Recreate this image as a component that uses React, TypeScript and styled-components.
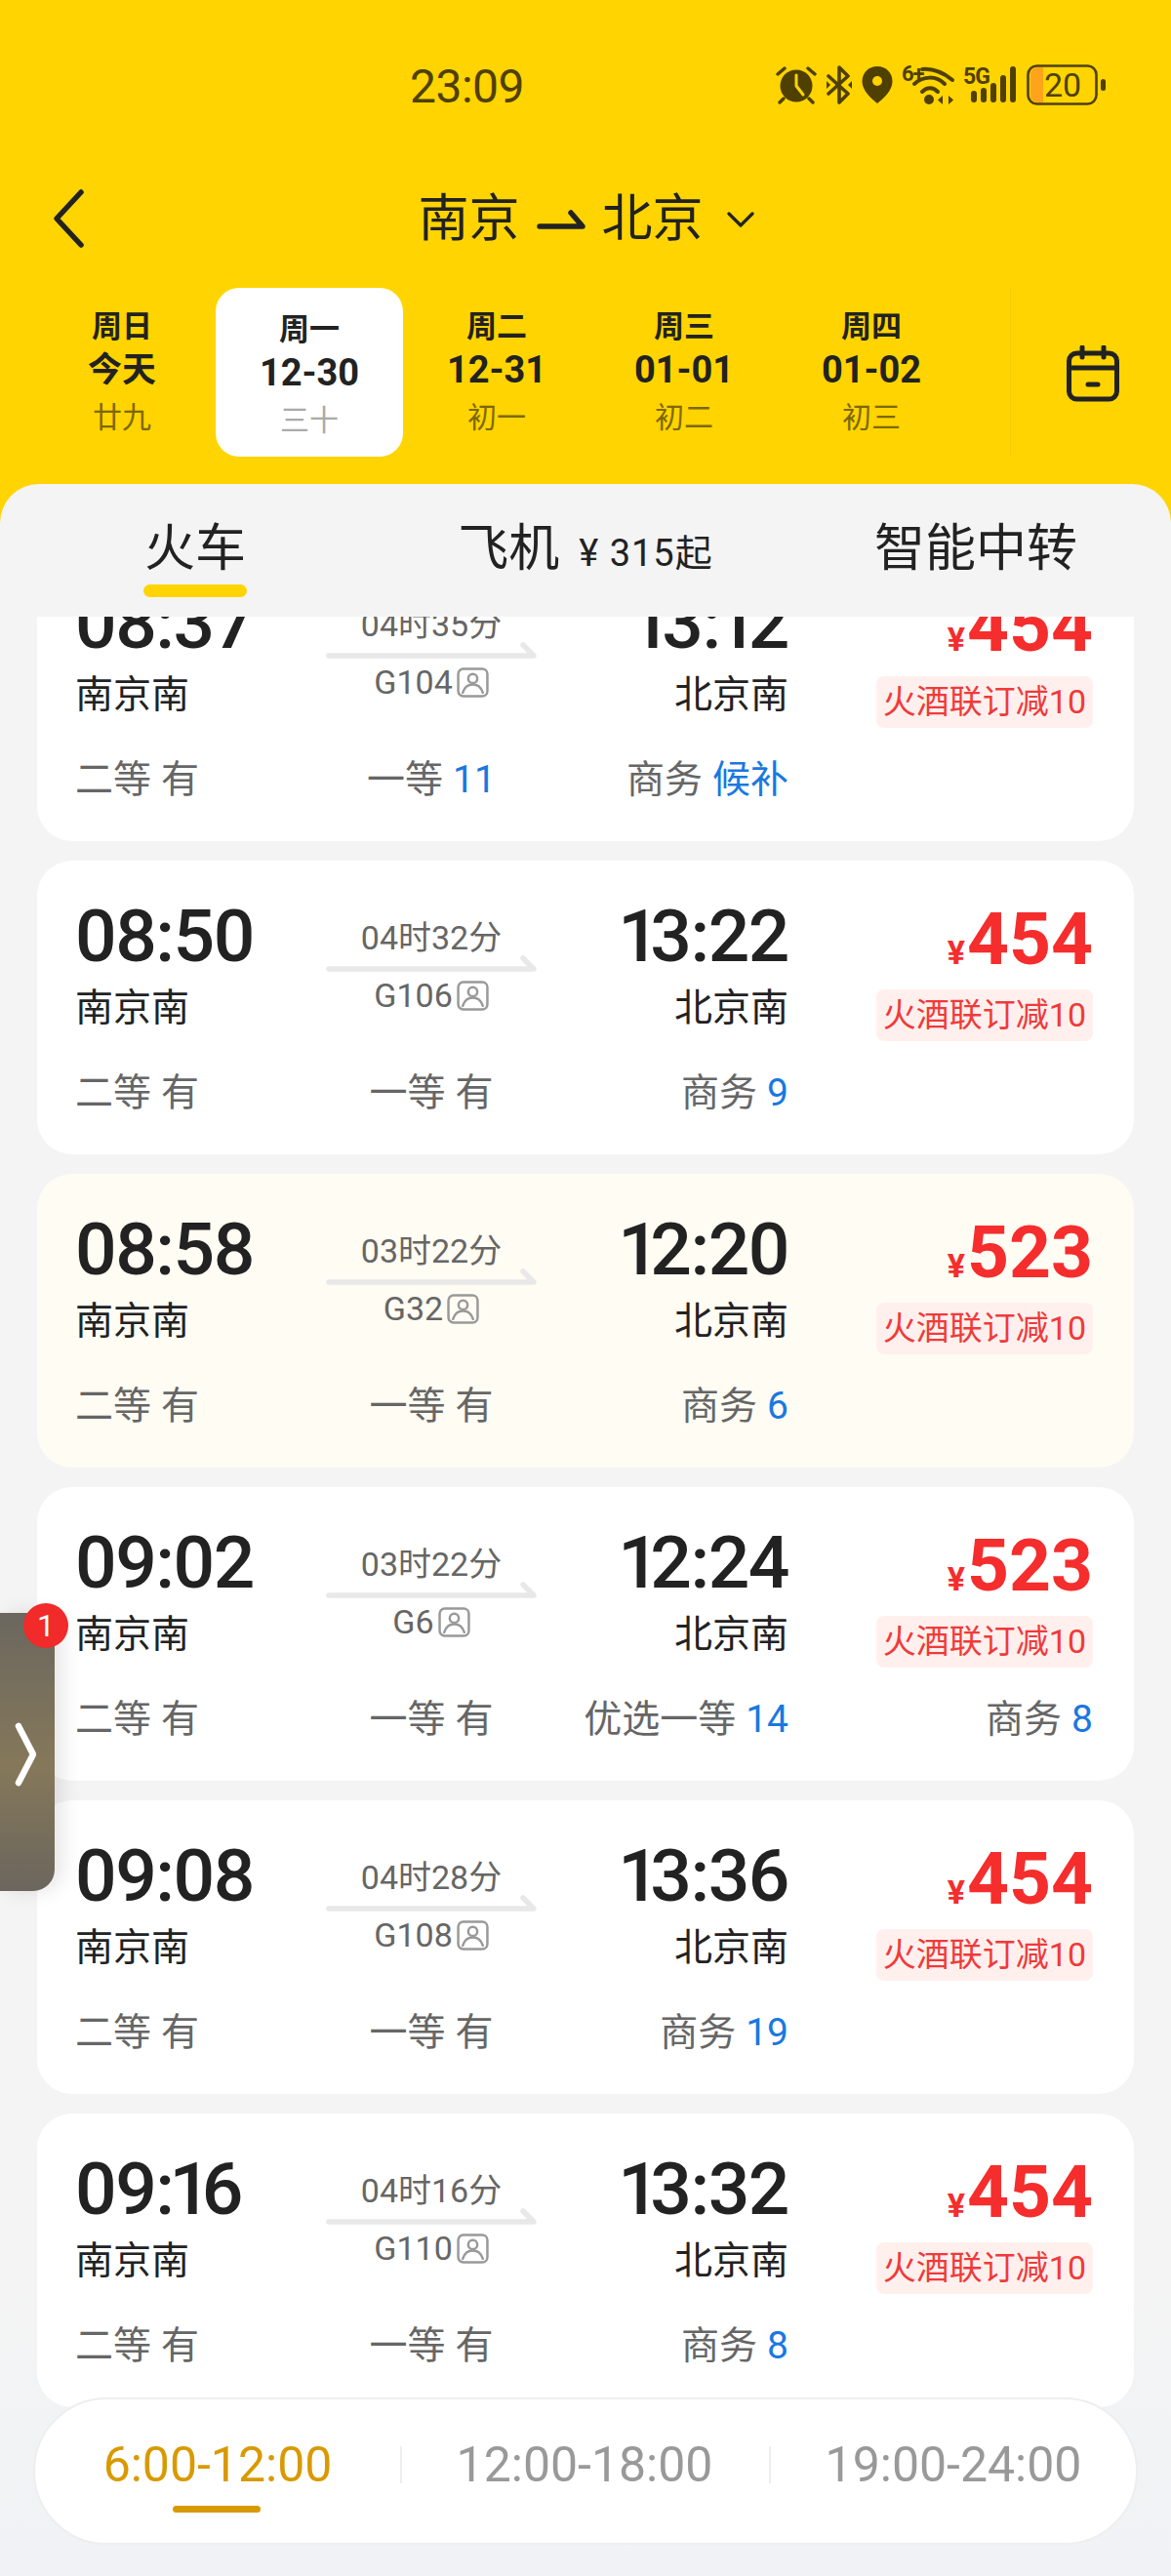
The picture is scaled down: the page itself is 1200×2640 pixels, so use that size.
import styled, { createGlobalStyle } from 'styled-components';

const GlobalStyle = createGlobalStyle`
    html, body {
        margin: 0;
        padding: 0;
        background: #f4f4f4;
    }
    * {
        box-sizing: border-box;
    }
`;

const YELLOW = '#ffd400';
const FONT = `Roboto, 'Noto Sans CJK SC', sans-serif`;

type Seat = { label: string; value: string; blue?: boolean };
type Train = {
    depart: string;
    arrive: string;
    duration: string;
    code: string;
    price: string;
    seats: Seat[];
    highlight?: boolean;
};

const trains: Train[] = [
    {
        depart: '08:37',
        arrive: '13:12',
        duration: '04时35分',
        code: 'G104',
        price: '454',
        seats: [
            { label: '二等', value: '有' },
            { label: '一等', value: '11', blue: true },
            { label: '商务', value: '候补', blue: true }
        ]
    },
    {
        depart: '08:50',
        arrive: '13:22',
        duration: '04时32分',
        code: 'G106',
        price: '454',
        seats: [
            { label: '二等', value: '有' },
            { label: '一等', value: '有' },
            { label: '商务', value: '9', blue: true }
        ]
    },
    {
        depart: '08:58',
        arrive: '12:20',
        duration: '03时22分',
        code: 'G32',
        price: '523',
        highlight: true,
        seats: [
            { label: '二等', value: '有' },
            { label: '一等', value: '有' },
            { label: '商务', value: '6', blue: true }
        ]
    },
    {
        depart: '09:02',
        arrive: '12:24',
        duration: '03时22分',
        code: 'G6',
        price: '523',
        seats: [
            { label: '二等', value: '有' },
            { label: '一等', value: '有' },
            { label: '优选一等', value: '14', blue: true },
            { label: '商务', value: '8', blue: true }
        ]
    },
    {
        depart: '09:08',
        arrive: '13:36',
        duration: '04时28分',
        code: 'G108',
        price: '454',
        seats: [
            { label: '二等', value: '有' },
            { label: '一等', value: '有' },
            { label: '商务', value: '19', blue: true }
        ]
    },
    {
        depart: '09:16',
        arrive: '13:32',
        duration: '04时16分',
        code: 'G110',
        price: '454',
        seats: [
            { label: '二等', value: '有' },
            { label: '一等', value: '有' },
            { label: '商务', value: '8', blue: true }
        ]
    }
];

const dates = [
    { week: '周日', day: '今天', lunar: '廿九', word: true },
    { week: '周一', day: '12-30', lunar: '三十', active: true },
    { week: '周二', day: '12-31', lunar: '初一' },
    { week: '周三', day: '01-01', lunar: '初二' },
    { week: '周四', day: '01-02', lunar: '初三' },
    { week: '周五', day: '01-03', lunar: '初四' }
];

const AlarmIcon = () => (
    <svg width="42" height="40" viewBox="0 0 42 40" fill="none">
        <circle cx="21" cy="21" r="16.5" fill="#4f4000" />
        <path d="M21 10v11l7 9" stroke={YELLOW} strokeWidth="3" strokeLinecap="round" strokeLinejoin="round" />
        <path d="M2 9l7-6M40 9l-7-6M8 34l-4 4M34 34l4 4" stroke="#4f4000" strokeWidth="3.4" strokeLinecap="round" />
    </svg>
);

const BluetoothIcon = () => (
    <svg width="28" height="40" viewBox="0 0 28 40" fill="none">
        <path
            d="M3 11l20 18-9 9V2l9 9L3 29"
            stroke="#4f4000"
            strokeWidth="3.6"
            strokeLinecap="round"
            strokeLinejoin="round"
        />
        <path d="M1 16v8l4-4zM27 16v8l-4-4z" fill="#4f4000" />
    </svg>
);

const PinIcon = () => (
    <svg width="32" height="38" viewBox="0 0 32 38">
        <path
            d="M16 0C7 0 .5 6.700.5 15.500.5 25 10 33 16 38c6-5 15.500-13 15.500-22.500C31.500 6.700 25 0 16 0z"
            fill="#4f4000"
        />
        <circle cx="16" cy="15" r="5" fill={YELLOW} />
    </svg>
);

const WifiIcon = () => (
    <svg width="54" height="42" viewBox="0 0 54 42" fill="none" overflow="visible">
        <text x="0" y="17" fontFamily="Roboto, sans-serif" fontSize="22" fontWeight="700" fill="#4f4000" letterSpacing="-1">
            6+
        </text>
        <path d="M21 5c11-1 21 3 31 11" stroke="#4f4000" strokeWidth="4" strokeLinecap="round" />
        <path d="M13 20c9-8 22-9 31 0" stroke="#4f4000" strokeWidth="4" strokeLinecap="round" />
        <path d="M21 28c5-5 11-5 16 0" stroke="#4f4000" strokeWidth="4" strokeLinecap="round" />
        <circle cx="28" cy="36" r="5" fill="#4f4000" />
        <path d="M42 32l-5 4.500 5 4.500zM48 32l5 4.500-5 4.500z" fill="#4f4000" />
    </svg>
);

const SignalIcon = () => (
    <svg width="56" height="40" viewBox="0 0 56 40" overflow="visible">
        <text x="0" y="19" fontFamily="Roboto, sans-serif" fontSize="23" fontWeight="700" fill="#4f4000" letterSpacing="-1">
            5G
        </text>
        <rect x="8" y="26" width="6" height="12" rx="3" fill="#4f4000" />
        <rect x="18" y="23" width="6" height="15" rx="3" fill="#4f4000" />
        <rect x="28" y="18" width="6" height="20" rx="3" fill="#4f4000" />
        <rect x="38" y="10" width="6" height="28" rx="3" fill="#4f4000" />
        <rect x="48" y="1" width="6" height="37" rx="3" fill="#4f4000" />
    </svg>
);

const BatteryIcon = () => (
    <svg width="82" height="42" viewBox="0 0 82 42" fill="none">
        <rect x="1.500" y="1.500" width="70" height="39" rx="9" stroke="#4f4000" strokeWidth="2.600" />
        <path d="M4 10a7 7 0 0 1 7-7h6v36h-6a7 7 0 0 1-7-7z" fill="#ffa31a" />
        <rect x="76" y="15" width="5" height="12" rx="2.500" fill="#4f4000" />
        <text x="18" y="33" fontFamily="Roboto, sans-serif" fontSize="34" fontWeight="400" fill="#4f4000">
            20
        </text>
    </svg>
);

const BackIcon = () => (
    <svg width="36" height="62" viewBox="0 0 36 62" fill="none">
        <path d="M31 4L6 31l25 27" stroke="#222" strokeWidth="5.500" strokeLinecap="round" strokeLinejoin="round" />
    </svg>
);

const RouteArrow = () => (
    <svg width="50" height="20" viewBox="0 0 50 20" fill="none">
        <path d="M3 17h44L35 3" stroke="#222" strokeWidth="5.500" strokeLinecap="round" strokeLinejoin="round" />
    </svg>
);

const DownIcon = () => (
    <svg width="30" height="16" viewBox="0 0 30 16" fill="none">
        <path d="M3 2l12 12L27 2" stroke="#222" strokeWidth="3.200" strokeLinecap="round" strokeLinejoin="round" />
    </svg>
);

const CalendarIcon = () => (
    <svg width="54" height="58" viewBox="0 0 54 58" fill="none">
        <rect x="2.500" y="8" width="49" height="47" rx="8" stroke="#222" strokeWidth="5" />
        <path d="M3 23h48M16 2v10M38 2v10M22 40h10" stroke="#222" strokeWidth="5" strokeLinecap="round" />
    </svg>
);

const TrackArrow = () => (
    <svg width="216" height="18" viewBox="0 0 216 18" fill="none">
        <path d="M3 15h210L202 4" stroke="#e8e8e8" strokeWidth="5.500" strokeLinecap="round" strokeLinejoin="round" />
    </svg>
);

const IdIcon = () => (
    <svg width="33" height="31" viewBox="0 0 32 30" fill="none">
        <rect x="1.500" y="1.500" width="29" height="27" rx="5" stroke="#999" strokeWidth="2.400" />
        <circle cx="16" cy="11" r="4.500" stroke="#999" strokeWidth="2.400" />
        <path d="M6 25c2-6 6-8 10-8s8 2 10 8" stroke="#999" strokeWidth="2.400" strokeLinecap="round" />
    </svg>
);

const HandleChevron = () => (
    <svg width="22" height="66" viewBox="0 0 22 66" fill="none">
        <path d="M4 4l15 29L4 62" stroke="#fff" strokeWidth="6.500" strokeLinecap="round" strokeLinejoin="round" />
    </svg>
);

// the reference's digits are proportional, roboto's are not: pull the 1s in
const TimeText = ({ value }: { value: string }) => (
    <Time>
        {value.split('').map((c, i) => (
            <TimeChar key={i} $narrow={c === '1'}>
                {c}
            </TimeChar>
        ))}
    </Time>
);

export default function App() {
    return (
        <Page>
            <GlobalStyle />
            <Header>
                <StatusBar>
                    <Clock>23:09</Clock>
                    <StatusIcons>
                        <AlarmIcon />
                        <BluetoothIcon />
                        <PinIcon />
                        <WifiIcon />
                        <SignalIcon />
                        <BatteryIcon />
                    </StatusIcons>
                </StatusBar>
                <NavBar>
                    <BackButton>
                        <BackIcon />
                    </BackButton>
                    <Route>
                        <span>南京</span>
                        <RouteArrow />
                        <span>北京</span>
                        <DownIcon />
                    </Route>
                </NavBar>
                <DateStrip>
                    <DateList>
                        {dates.map((d) => (
                            <DateItem key={d.week} $active={d.active}>
                                <DateWeek>{d.week}</DateWeek>
                                <DateDay $word={d.word}>{d.day}</DateDay>
                                <DateLunar $active={d.active}>{d.lunar}</DateLunar>
                            </DateItem>
                        ))}
                    </DateList>
                    <CalendarButton>
                        <CalendarIcon />
                    </CalendarButton>
                </DateStrip>
            </Header>
            <Panel>
                <Tabs>
                    <Tab $active>火车</Tab>
                    <Tab>
                        飞机
                        <TabPrice>¥ 315起</TabPrice>
                    </Tab>
                    <Tab>智能中转</Tab>
                </Tabs>
                <List>
                    <Cards>
                        {trains.map((t) => (
                            <Card key={t.code} $highlight={t.highlight}>
                                <Columns>
                                    <div>
                                        <TimeText value={t.depart} />
                                        <Station>南京南</Station>
                                    </div>
                                    <Middle>
                                        <Duration>{t.duration}</Duration>
                                        <TrackArrow />
                                        <TrainCode>
                                            {t.code}
                                            <IdIcon />
                                        </TrainCode>
                                    </Middle>
                                    <RightCell>
                                        <TimeText value={t.arrive} />
                                        <Station>北京南</Station>
                                    </RightCell>
                                    <RightCell>
                                        <Price>
                                            <small>¥</small>
                                            {t.price}
                                        </Price>
                                        <Promo>火酒联订减10</Promo>
                                    </RightCell>
                                </Columns>
                                <SeatRow>
                                    {t.seats.map((s) => (
                                        <SeatCell key={s.label}>
                                            {s.label}
                                            <SeatValue $blue={s.blue}>{s.value}</SeatValue>
                                        </SeatCell>
                                    ))}
                                </SeatRow>
                            </Card>
                        ))}
                    </Cards>
                </List>
            </Panel>
            <SideHandle>
                <HandleBadge>1</HandleBadge>
                <HandleChevron />
            </SideHandle>
            <TimeBar>
                <TimeSlot $active>
                    6:00-12:00
                    <SlotMark />
                </TimeSlot>
                <TimeSlot>12:00-18:00</TimeSlot>
                <TimeSlot>19:00-24:00</TimeSlot>
            </TimeBar>
        </Page>
    );
}

const Page = styled.div`
    position: relative;
    width: 1200px;
    height: 2640px;
    overflow: hidden;
    display: flex;
    flex-direction: column;
    font-family: ${FONT};
    color: #222;
`;

const Header = styled.header`
    height: 536px;
    flex-shrink: 0;
    background: ${YELLOW};
`;

const StatusBar = styled.div`
    height: 176px;
    padding: 66px 66px 0 420px;
    display: flex;
    justify-content: space-between;
    align-items: flex-start;
`;

const Clock = styled.div`
    font-size: 48px;
    line-height: 46px;
    letter-spacing: -0.5px;
    color: #4f4000;
`;

const StatusIcons = styled.div`
    display: flex;
    align-items: center;
    gap: 9px;
    height: 42px;
`;

const NavBar = styled.div`
    height: 98px;
    position: relative;
    display: flex;
    align-items: center;
    justify-content: center;
`;

const BackButton = styled.div`
    position: absolute;
    left: 52px;
    top: 17px;
    display: flex;
`;

const Route = styled.div`
    display: flex;
    align-items: center;
    gap: 17px;
    padding-left: 2px;
    font-size: 52px;
    line-height: 60px;
    svg:nth-of-type(2) {
        margin-left: 6px;
    }
`;

const DateStrip = styled.div`
    height: 173px;
    margin-top: 21px;
    display: flex;
    align-items: stretch;
`;

const DateList = styled.div`
    width: 1036px;
    padding-left: 29px;
    display: flex;
    overflow: hidden;
    border-right: 1px solid #f7cd00;
`;

const DateItem = styled.div<{ $active?: boolean }>`
    width: 192px;
    flex-shrink: 0;
    display: flex;
    flex-direction: column;
    align-items: center;
    border-radius: 24px;
    padding-top: ${(p) => (p.$active ? 25 : 22)}px;
    background: ${(p) => (p.$active ? '#fff' : 'transparent')};
`;

const DateWeek = styled.div`
    font-size: 31px;
    line-height: 36px;
    font-weight: 700;
`;

const DateDay = styled.div<{ $word?: boolean }>`
    font-size: ${(p) => (p.$word ? 35 : 38)}px;
    line-height: 53px;
    font-weight: 700;
`;

const DateLunar = styled.div<{ $active?: boolean }>`
    font-size: 30px;
    line-height: 44px;
    color: ${(p) => (p.$active ? '#aaa' : '#7d6800')};
`;

const CalendarButton = styled.div`
    flex: 1;
    display: flex;
    justify-content: center;
    padding: 59px 0 0 4px;
`;

const Panel = styled.main`
    flex: 1;
    min-height: 0;
    margin-top: -40px;
    border-radius: 40px 40px 0 0;
    display: flex;
    flex-direction: column;
    background: linear-gradient(to bottom, #f4f4f4 85%, #f0f2f5 100%);
`;

const Tabs = styled.div`
    height: 136px;
    flex-shrink: 0;
    display: grid;
    grid-template-columns: repeat(3, 400px);
`;

const Tab = styled.div<{ $active?: boolean }>`
    position: relative;
    display: flex;
    justify-content: center;
    align-items: baseline;
    gap: 20px;
    padding-top: 37px;
    font-size: 52px;
    line-height: 60px;
    &::after {
        content: '';
        display: ${(p) => (p.$active ? 'block' : 'none')};
        position: absolute;
        left: 147px;
        top: 103px;
        width: 106px;
        height: 13px;
        border-radius: 7px;
        background: ${YELLOW};
    }
`;

const TabPrice = styled.span`
    font-size: 38px;
    letter-spacing: 1px;
`;

const List = styled.div`
    flex: 1;
    min-height: 0;
    overflow: hidden;
    padding: 0 38px;
`;

const Cards = styled.div`
    margin-top: -71px;
    display: flex;
    flex-direction: column;
    gap: 20px;
`;

const Card = styled.article<{ $highlight?: boolean }>`
    height: 301px;
    flex-shrink: 0;
    padding: 44px 41px 0 39px;
    border-radius: 36px;
    background: ${(p) => (p.$highlight ? '#fffcf3' : '#fff')};
`;

const Columns = styled.div`
    display: grid;
    grid-template-columns: 257px 216px 258px 312px;
`;

const Time = styled.div`
    display: flex;
    font-size: 75px;
    line-height: 66px;
    height: 66px;
    font-weight: 500;
    letter-spacing: -1.5px;
    color: #222;
`;

const TimeChar = styled.span<{ $narrow?: boolean }>`
    margin: ${(p) => (p.$narrow ? '0 -8px 0 -4px' : '0')};
`;

const Station = styled.div`
    margin-top: 19px;
    font-size: 39px;
    line-height: 44px;
    color: #222;
`;

const Middle = styled.div`
    display: flex;
    flex-direction: column;
    align-items: center;
`;

const Duration = styled.div`
    margin-top: 15px;
    margin-bottom: -3px;
    font-size: 34px;
    line-height: 40px;
    color: #666;
`;

const TrainCode = styled.div`
    display: flex;
    align-items: center;
    gap: 4px;
    margin-top: 6px;
    font-size: 34px;
    line-height: 36px;
    color: #666;
`;

const RightCell = styled.div`
    display: flex;
    flex-direction: column;
    align-items: flex-end;
`;

const Price = styled.div`
    height: 66px;
    margin-top: 3px;
    font-size: 75px;
    line-height: 66px;
    font-weight: 700;
    color: #f52d2d;
    small {
        font-size: 34px;
        margin-right: 2px;
    }
`;

const Promo = styled.div`
    margin-top: 19px;
    height: 53px;
    padding: 0 7px;
    border-radius: 8px;
    font-size: 34px;
    line-height: 53px;
    color: #f03a3a;
    background: #fff0ee;
`;

const SeatRow = styled.div`
    margin-top: 31px;
    display: grid;
    grid-template-columns: 257px 216px 258px 312px;
`;

const SeatCell = styled.div`
    font-size: 39px;
    line-height: 44px;
    color: #666;
    white-space: nowrap;
    &:nth-child(2) {
        text-align: center;
    }
    &:nth-child(n + 3) {
        text-align: right;
    }
`;

const SeatValue = styled.span<{ $blue?: boolean }>`
    margin-left: 10px;
    color: ${(p) => (p.$blue ? '#1a78e0' : '#666')};
`;

const SideHandle = styled.div`
    position: absolute;
    left: 0;
    top: 1653px;
    width: 56px;
    height: 285px;
    padding-left: 15px;
    display: flex;
    align-items: center;
    border-radius: 0 22px 22px 0;
    background: linear-gradient(to bottom, #6b675f 0%, #85785a 55%, #6b665d 100%);
    box-shadow: 8px 0 20px rgba(0, 0, 0, 0.1);
    svg {
        margin-top: 4px;
    }
`;

const HandleBadge = styled.div`
    position: absolute;
    left: 24px;
    top: -10px;
    width: 46px;
    height: 46px;
    border-radius: 50%;
    background: #f12a2a;
    color: #fff;
    font-size: 32px;
    line-height: 46px;
    text-align: center;
`;

const TimeBar = styled.nav`
    position: absolute;
    left: 34px;
    top: 2457px;
    width: 1132px;
    height: 151px;
    border-radius: 76px;
    border: 2px solid #eeeeee;
    background: #fff;
    display: grid;
    grid-template-columns: 374px 378px 378px;
    align-items: start;
    padding-top: 48px;
`;

const TimeSlot = styled.div<{ $active?: boolean }>`
    position: relative;
    height: 38px;
    text-align: center;
    font-size: 50px;
    line-height: 38px;
    color: ${(p) => (p.$active ? '#d89a00' : '#999')};
    &:nth-child(n + 2)::before {
        content: '';
        position: absolute;
        left: 0;
        top: 0;
        height: 38px;
        width: 2px;
        background: #eeeeee;
    }
`;

const SlotMark = styled.div`
    position: absolute;
    left: 141px;
    top: 61px;
    width: 90px;
    height: 7px;
    border-radius: 4px;
    background: #d89a00;
`;
